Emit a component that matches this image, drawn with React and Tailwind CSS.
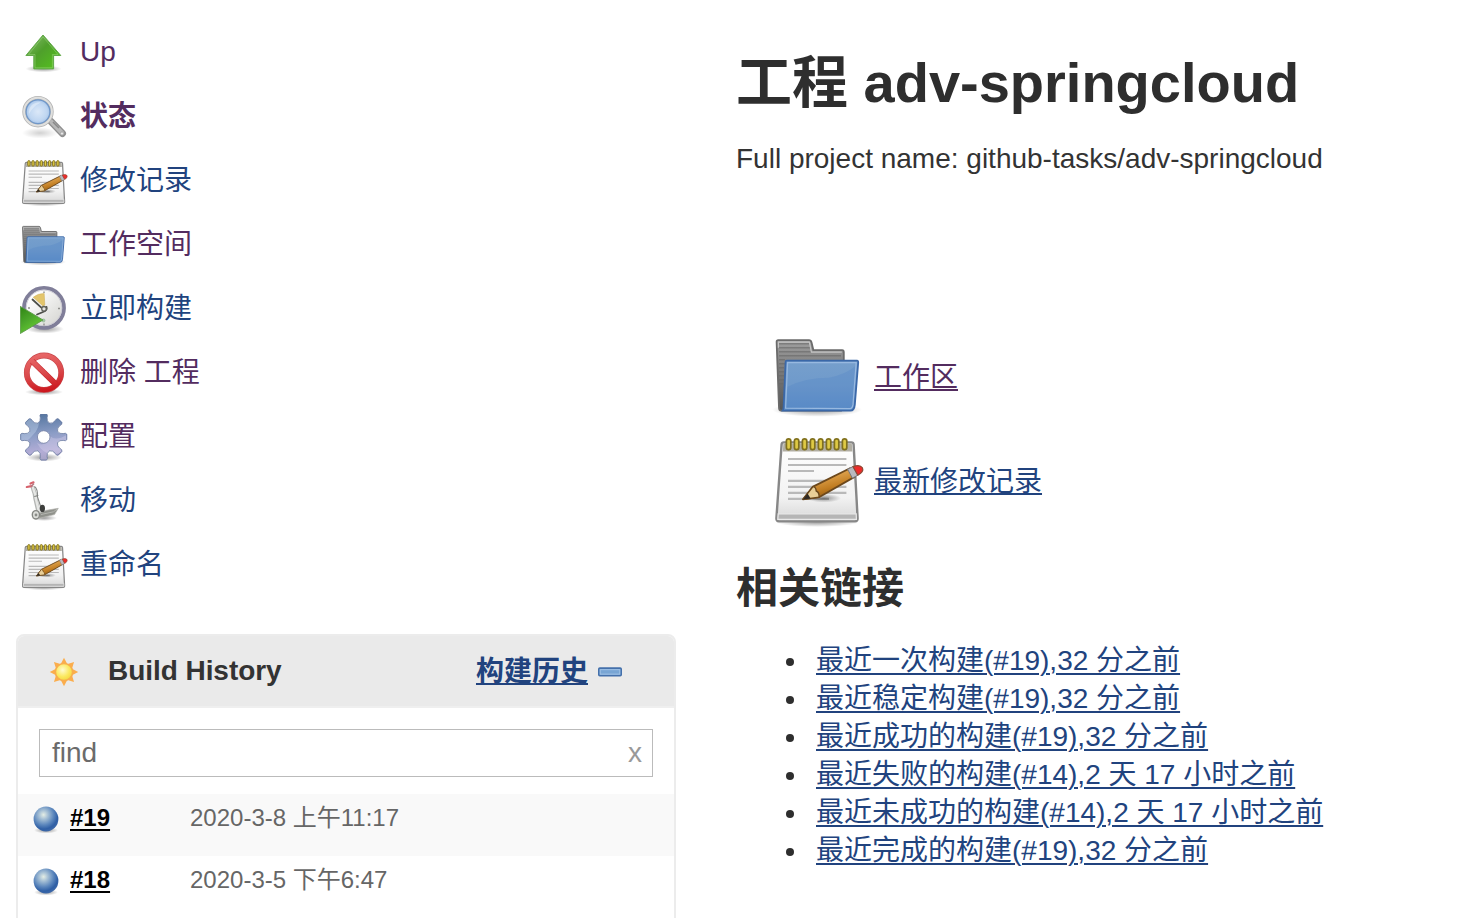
const SANS = "font-['Liberation_Sans','Noto_Sans_CJK_SC',sans-serif]";

function UpIcon({ className }) {
  return (
    <svg viewBox="0 0 48 48" className={className}>
      <defs>
        <linearGradient id="up-fill" x1="0" y1="0" x2="1" y2="1">
          <stop offset="0" stopColor="#8cbf72" />
          <stop offset="0.45" stopColor="#4f9f2c" />
          <stop offset="1" stopColor="#55c41c" />
        </linearGradient>
        <radialGradient id="soft-shadow">
          <stop offset="0" stopColor="#000" stopOpacity="0.4" />
          <stop offset="1" stopColor="#000" stopOpacity="0" />
        </radialGradient>
      </defs>
      <ellipse cx="23.500" cy="38.800" rx="18" ry="3.500" fill="url(#soft-shadow)" />
      <path d="M23 5 L40.800 25.500 H33.600 V38.900 H13.800 V25.500 H5.900 Z" fill="url(#up-fill)" stroke="#62a84a" strokeWidth="1" strokeLinejoin="round" />
      <path d="M23 6.800 L38 24.500 H32.400 V37.800 H15 V24.500 H8.500 Z" fill="none" stroke="#a5dd85" strokeOpacity="0.5" strokeWidth="0.900" />
    </svg>
  );
}

function SearchIcon({ className }) {
  return (
    <svg viewBox="0 0 48 48" className={className}>
      <defs>
        <radialGradient id="lens" cx="0.5" cy="0.500" r="0.550">
          <stop offset="0" stopColor="#dbe8f8" />
          <stop offset="0.600" stopColor="#bfd6f1" />
          <stop offset="1" stopColor="#8db1de" />
        </radialGradient>
      </defs>
      <ellipse cx="20" cy="39" rx="18" ry="5.500" fill="url(#soft-shadow)" opacity="0.450" />
      <path d="M31 27.500 L42.500 39.500" stroke="#909090" strokeWidth="7" strokeLinecap="round" />
      <path d="M31.500 28 L42 39" stroke="#b9b9b9" strokeWidth="4.500" strokeLinecap="round" />
      <path d="M33 28 L39 34" stroke="#8a8a8a" strokeWidth="1.500" />
      <circle cx="42" cy="39.500" r="1.600" fill="#e8e8e8" stroke="#8a8a8a" strokeWidth="0.500" />
      <circle cx="18" cy="17.700" r="13.800" fill="url(#lens)" stroke="#b4b4b4" strokeWidth="3.800" />
      <circle cx="18" cy="17.700" r="13.900" fill="none" stroke="#e0e0de" strokeWidth="2" />
      <circle cx="18" cy="17.700" r="11.900" fill="none" stroke="#6f97c9" strokeWidth="1.200" />
      <path d="M9 20 A10 10 0 0 1 21 8.500 Q13 12 9 20" fill="#fff" opacity="0.350" />
    </svg>
  );
}

function NotepadIcon({ className, viewBox = "0 0 48 48" }) {
  return (
    <svg viewBox={viewBox} className={className}>
      <defs>
        <linearGradient id="paper" x1="0" y1="0" x2="0" y2="1">
          <stop offset="0" stopColor="#ffffff" />
          <stop offset="0.700" stopColor="#f2f2f2" />
          <stop offset="1" stopColor="#d6d6d6" />
        </linearGradient>
        <linearGradient id="pencil" x1="0" y1="0" x2="0.450" y2="1">
          <stop offset="0.200" stopColor="#edb563" />
          <stop offset="0.700" stopColor="#c17d22" />
          <stop offset="1" stopColor="#8a5410" />
        </linearGradient>
      </defs>
      <ellipse cx="24" cy="44.500" rx="21" ry="2.500" fill="url(#soft-shadow)" />
      <path d="M7.400 4.700 H41.200 Q42.200 4.700 42.300 5.700 L44.300 42.500 Q44.400 44.200 43 44.200 H5 Q3.600 44.200 3.700 42.500 L6.300 5.700 Q6.400 4.700 7.400 4.700 Z" fill="url(#paper)" stroke="#878787" strokeWidth="1.200" />
      <path d="M7.200 5.300 H41.400 L41.700 9.200 H6.900 Z" fill="#b1aea3" />
      <path d="M4.600 40.400 H43.600 L43.700 43.200 H4.400 Z" fill="#b5b5b5" stroke="#e9e9e9" strokeWidth="0.600" />
      <path d="M9.500 13 H38.700 M9.500 16 H38.700 M9.500 19 H22.500 M9.500 23.900 H38.700 M9.500 26.900 H38.700 M9.500 29.900 H38.700 M9.500 32.900 H30" stroke="#b9b9b9" strokeWidth="1.100" />
      <g fill="#dfca45" stroke="#80701d" strokeWidth="0.850">
        {[9.8, 13.8, 17.8, 21.8, 25.8, 29.8, 33.8, 37.8].map((x) => (
          <rect key={x} x={x - 1.1} y="2.900" width="2.200" height="5.400" rx="1.100" />
        ))}
      </g>
      <ellipse cx="27.500" cy="32.600" rx="8.500" ry="2.200" fill="url(#soft-shadow)" />
      <path d="M17 33.200 L22 26.800 L40.500 17.600 L43 21.800 L25 32.100 Z" fill="url(#pencil)" stroke="#6c481c" strokeWidth="0.900" strokeLinejoin="round" />
      <path d="M17 33.200 L22 26.800 Q23.500 27 23.600 29 Q25.300 29.700 25 32.100 Z" fill="#e9cf98" stroke="#6c481c" strokeWidth="0.700" strokeLinejoin="round" />
      <path d="M17 33.200 L19.300 30.300 L20.800 32.700 Z" fill="#2f2a24" />
      <path d="M39.300 18.100 L42 16.800 L44.400 21.100 L41.700 22.600 Z" fill="#b9b9be" stroke="#77777c" strokeWidth="0.500" />
      <path d="M42 16.800 Q45.500 15.500 46.700 17.400 Q47.600 19.400 44.400 21.100 Z" fill="#ee2b2b" stroke="#8c4a35" strokeWidth="0.600" />
    </svg>
  );
}

function SmallNotepadIcon({ className }) {
  return <NotepadIcon className={className} viewBox="1.2 0.4 46.4 46.4" />;
}

function FolderIcon({ className, viewBox = "0 -0.4 48 48" }) {
  return (
    <svg viewBox={viewBox} className={className}>
      <defs>
        <linearGradient id="folder-back" x1="0" y1="0" x2="0" y2="1">
          <stop offset="0" stopColor="#a0a0a0" />
          <stop offset="0.400" stopColor="#7d7d7d" />
          <stop offset="1" stopColor="#565656" />
        </linearGradient>
        <linearGradient id="folder-front" x1="0" y1="0" x2="0" y2="1">
          <stop offset="0" stopColor="#769fcc" />
          <stop offset="0.500" stopColor="#6f9acb" />
          <stop offset="1" stopColor="#5c8dc7" />
        </linearGradient>
      </defs>
      <ellipse cx="24" cy="40" rx="22.500" ry="3.500" fill="url(#soft-shadow)" />
      <path d="M4.600 5.200 H20 Q21 5.200 21.300 6.400 L22.200 10.200 H36.600 Q37.400 10.200 37.400 11.200 V20 L36 40.400 H6 Q5 40.400 5 39 L3.800 6 Q3.800 5.200 4.600 5.200 Z" fill="url(#folder-back)" stroke="#6b6b6b" strokeWidth="0.900" />
      <path d="M5 7 H20 M5 9 H20.500 M5 11 H21 M5 13 H36 M5 15 H8 M5 17 H8 M5 19 H7.500 M5 21 H7.500 M5 23 H7.500 M5 25 H7.500 M5 27 H7" stroke="#686868" strokeWidth="0.700" opacity="0.600" />
      <path d="M4.700 9 V6.200 H20.200 L21.200 11.200 H36.400" fill="none" stroke="#c4c4c4" strokeWidth="0.600" />
      <path d="M8.900 15.400 H44 Q44.700 15.400 44.600 16.400 L42.900 37.500 Q42.600 40.400 40.700 40.400 H6.900 Q7.200 40 7.300 38.500 L8.300 16 Q8.300 15.400 8.900 15.400 Z" fill="url(#folder-front)" stroke="#3b68a8" strokeWidth="0.900" />
      <path d="M9.300 28.500 Q18 24 30 24 Q39 22 43.300 18 L41.800 37 Q41.500 39.300 40.200 39.300 H8.500 Z" fill="#4e83c4" opacity="0.280" />
      <path d="M8.300 39.200 L9.300 16.400 H43.600 L42 37.300 Q41.700 39.400 40.500 39.400 Z" fill="none" stroke="#98b9e0" strokeWidth="0.600" />
    </svg>
  );
}

function SmallFolderIcon({ className }) {
  return <FolderIcon className={className} viewBox="1.3 0.9 47 47" />;
}

function BuildNowIcon({ className }) {
  return (
    <svg viewBox="0 0 48 48" className={className}>
      <defs>
        <linearGradient id="clock-face" x1="0" y1="0" x2="1" y2="1">
          <stop offset="0.200" stopColor="#ffffff" />
          <stop offset="1" stopColor="#d0d0cc" />
        </linearGradient>
        <linearGradient id="play" x1="0" y1="0" x2="0.600" y2="1">
          <stop offset="0" stopColor="#2f8313" />
          <stop offset="0.500" stopColor="#4ba62b" />
          <stop offset="1" stopColor="#6ad033" />
        </linearGradient>
      </defs>
      <ellipse cx="25" cy="43" rx="19" ry="4.500" fill="url(#soft-shadow)" />
      <circle cx="24" cy="21.900" r="20" fill="url(#clock-face)" stroke="#807e99" strokeWidth="3.800" />
      <circle cx="24" cy="21.900" r="17.800" fill="none" stroke="#c9c8d2" strokeWidth="0.900" />
      <path d="M23 20 L13.200 11.300 Q17.500 7.500 24.200 7.500 L24.800 19 Z" fill="#e3c56c" stroke="#cbaa55" strokeWidth="0.500" />
      <path d="M12.500 13.500 L21.600 21.800 M26.500 20.800 Q27.500 24.500 23 26 L17 28.500" fill="none" stroke="#4c4e48" strokeWidth="1.800" strokeLinecap="round" />
      <circle cx="24" cy="22.800" r="2.300" fill="#e6e6e3" stroke="#60625c" strokeWidth="1.300" />
      <path d="M24 7 V5.500 M38 22.500 H40 M24 37.500 V39.500 M8 22 H10" stroke="#90908d" strokeWidth="1.400" />
      <circle cx="23.500" cy="34.500" r="1.900" fill="#a3c3a5" />
      <path d="M0.300 20.400 L23 34 L0.300 47.500 Z" fill="url(#play)" stroke="#5b9a48" strokeWidth="0.900" />
    </svg>
  );
}

function DeleteIcon({ className }) {
  return (
    <svg viewBox="0 0 48 48" className={className}>
      <defs>
        <linearGradient id="ban-line" gradientUnits="userSpaceOnUse" x1="20" y1="2" x2="28" y2="43">
          <stop offset="0" stopColor="#e96a6a" />
          <stop offset="0.500" stopColor="#db4b4d" />
          <stop offset="1" stopColor="#cb1118" />
        </linearGradient>
      </defs>
      <ellipse cx="24" cy="42" rx="19" ry="3.200" fill="url(#soft-shadow)" />
      <circle cx="24" cy="22.700" r="17.200" fill="#fff" stroke="#c8474b" strokeWidth="5.800" />
      <circle cx="24" cy="22.700" r="17.200" fill="none" stroke="url(#ban-line)" strokeWidth="4.600" />
      <path d="M12 11 L36 34.400" stroke="#c8252b" strokeWidth="5.800" />
      <path d="M11.500 10.500 L36.500 34.900" stroke="url(#ban-line)" strokeWidth="4.600" />
    </svg>
  );
}

const GEAR_ANGLES = [0, 45, 90, 135, 180, 225, 270, 315];

function GearIcon({ className }) {
  return (
    <svg viewBox="0 0 48 48" className={className}>
      <defs>
        <linearGradient id="gear" gradientUnits="userSpaceOnUse" x1="20" y1="0" x2="27" y2="46">
          <stop offset="0" stopColor="#54759f" />
          <stop offset="0.450" stopColor="#8c9dc6" />
          <stop offset="0.800" stopColor="#b3add6" />
          <stop offset="1" stopColor="#a7a3c5" />
        </linearGradient>
        <mask id="gear-mask">
          <g fill="#fff">
            <circle cx="23.700" cy="23" r="15" />
            {GEAR_ANGLES.map((a) => (
              <path key={a} d="M18.400 9.500 Q20.900 7 20.300 3.500 Q19.300 0.800 21 -0.500 H26.400 Q28.100 0.800 27.100 3.500 Q26.500 7 29 9.500 Z" transform={`rotate(${a} 23.7 23)`} />
            ))}
          </g>
          <circle cx="23.700" cy="23" r="6" fill="#000" />
        </mask>
      </defs>
      <ellipse cx="24" cy="43.500" rx="18" ry="4" fill="url(#soft-shadow)" />
      <g mask="url(#gear-mask)">
        <rect width="48" height="48" fill="url(#gear)" />
        <path d="M0 0 H19 Q21 14 12 22 Q6 29 0 30 Z" fill="#c5d8ed" opacity="0.400" />
        <path d="M30 22 Q36 28 48 20 V36 L33 41 Q22 39 17 29 Q25 34 30 22 Z" fill="#ded8f2" opacity="0.350" />
      </g>
      <circle cx="23.700" cy="23" r="6.300" fill="#fff" stroke="#7b86a9" strokeWidth="0.900" />
      <g fill="none" stroke="#68799f" strokeWidth="0.900" opacity="0.850">
        {GEAR_ANGLES.map((a) => (
          <path key={a} d="M17.900 9.300 Q20.900 7 20.300 3.500 Q19.300 0.800 21 0 H26.400 Q28.100 0.800 27.100 3.500 Q26.500 7 29.500 9.300" transform={`rotate(${a} 23.7 23)`} />
        ))}
      </g>
    </svg>
  );
}

function MoveIcon({ className }) {
  return (
    <svg viewBox="0 0 48 48" className={className}>
      <ellipse cx="24" cy="40" rx="13" ry="3" fill="url(#soft-shadow)" />
      <path d="M12.500 8.500 L13.500 12 Q15 15 15.300 20 L18.500 34" fill="none" stroke="#b3b5b3" strokeWidth="4.200" strokeLinejoin="round" />
      <path d="M12.800 9 L14 13 Q15.500 16 15.700 20 L19 34" fill="none" stroke="#e6e7e5" strokeWidth="2.400" />
      <path d="M14.500 8.500 Q18 11 17.500 19 L21.500 31" fill="none" stroke="#858785" strokeWidth="1.100" />
      <path d="M14.300 18.500 L18.300 17.500" stroke="#7b7d7a" strokeWidth="1" />
      <path d="M6.800 9 L11.500 8.200 M10.500 5.500 L13.500 4.300" stroke="#d6626c" strokeWidth="2.200" strokeLinecap="round" />
      <path d="M11 8.800 L14 5.500" stroke="#b37880" strokeWidth="1.500" />
      <path d="M20 34.800 L26.500 32.300 L38.300 30.300 L34.500 36.600 L19 40.300 Z" fill="#8f918b" stroke="#b4b5b0" strokeWidth="0.700" />
      <path d="M21 36.500 L33.500 33.800 L37.600 30.700" fill="none" stroke="#b5b6b1" strokeWidth="1" />
      <ellipse cx="22.400" cy="30.400" rx="2.600" ry="3.600" fill="#3d3e3c" />
      <ellipse cx="15.900" cy="36.800" rx="3.600" ry="4.200" fill="#dddeda" stroke="#858783" strokeWidth="1.400" />
      <circle cx="16" cy="37" r="1.400" fill="#8b8d89" />
    </svg>
  );
}

function SunIcon({ className }) {
  return (
    <svg viewBox="0 0 32 32" className={className}>
      <defs>
        <radialGradient id="sun" cx="0.420" cy="0.380" r="0.650">
          <stop offset="0" stopColor="#fffbd0" />
          <stop offset="0.600" stopColor="#fbe960" />
          <stop offset="1" stopColor="#f3d640" />
        </radialGradient>
      </defs>
      <g fill="#fbad4c">
        {GEAR_ANGLES.map((a) => (
          <path key={a} d="M16 1.800 L19.500 8.500 H12.500 Z" transform={`rotate(${a} 16 16)`} />
        ))}
      </g>
      <circle cx="16" cy="16" r="8.600" fill="url(#sun)" stroke="#f8ad4e" strokeWidth="1.500" />
    </svg>
  );
}

function BallIcon({ className }) {
  return (
    <svg viewBox="0 0 32 32" className={className}>
      <defs>
        <radialGradient id="ball" cx="0.400" cy="0.330" r="0.680">
          <stop offset="0" stopColor="#e5eee5" />
          <stop offset="0.250" stopColor="#a9c2d6" />
          <stop offset="0.600" stopColor="#5c87bd" />
          <stop offset="0.850" stopColor="#2f5fa5" />
          <stop offset="1" stopColor="#3d68a8" />
        </radialGradient>
      </defs>
      <ellipse cx="16" cy="26.300" rx="12" ry="3.200" fill="url(#soft-shadow)" />
      <circle cx="16" cy="15" r="12.400" fill="url(#ball)" />
    </svg>
  );
}

function CollapseIcon({ className }) {
  return (
    <svg viewBox="0 0 24 10" className={className}>
      <rect x="0.800" y="1.100" width="22.400" height="7.600" rx="1" fill="#78a5d4" stroke="#4470ab" strokeWidth="1.600" />
      <rect x="2.200" y="2.700" width="19.600" height="4.400" fill="none" stroke="#a3c4e6" strokeWidth="0.900" />
    </svg>
  );
}

const VISITED = "text-[#532c5f]";
const LINK = "text-[#21437e]";

const tasks = [
  { label: "Up", Icon: UpIcon, style: VISITED, inset: "pb-1" },
  { label: "状态", Icon: SearchIcon, style: "text-[#532c5f] font-bold", inset: "pb-0.5" },
  { label: "修改记录", Icon: SmallNotepadIcon, style: LINK, inset: "pb-0.5" },
  { label: "工作空间", Icon: SmallFolderIcon, style: VISITED, inset: "pb-0.5" },
  { label: "立即构建", Icon: BuildNowIcon, style: LINK, inset: "pb-0.5" },
  { label: "删除 工程", Icon: DeleteIcon, style: VISITED, inset: "pb-0.5" },
  { label: "配置", Icon: GearIcon, style: VISITED, inset: "pb-0.5" },
  { label: "移动", Icon: MoveIcon, style: LINK, inset: "pb-0.5" },
  { label: "重命名", Icon: SmallNotepadIcon, style: LINK, inset: "pb-0.5" },
];

const builds = [
  { id: "#19", date: "2020-3-8 上午11:17" },
  { id: "#18", date: "2020-3-5 下午6:47" },
];

const permalinks = [
  "最近一次构建(#19),32 分之前",
  "最近稳定构建(#19),32 分之前",
  "最近成功的构建(#19),32 分之前",
  "最近失败的构建(#14),2 天 17 小时之前",
  "最近未成功的构建(#14),2 天 17 小时之前",
  "最近完成的构建(#19),32 分之前",
];

function BuildHistory() {
  return (
    <section className="mt-9 h-[320px] w-[660px] rounded-t-lg border-2 border-[#ececec] bg-white">
      <header className="flex h-[72px] items-center rounded-t-md border-b-2 border-[#efefef] bg-[#eaeaea] pl-[30px] pr-[52px]">
        <SunIcon className="mt-0.5 size-8" />
        <h2 className="ml-7 text-[28px] leading-8 font-bold tracking-[-0.05px] text-[#333]">Build History</h2>
        <a href="#" className="mt-0.5 ml-auto text-[28px] leading-8 font-bold text-[#21437e] underline decoration-2 underline-offset-2">构建历史</a>
        <CollapseIcon className="ml-2.5 mt-0.5 h-2.5 w-6" />
      </header>
      <div className="px-[21px] pt-[21px] pb-[17px]">
        <div className="flex h-12 items-center justify-between border border-[#bbb] px-3 text-[28px] leading-8">
          <span className="text-[#6b6b6b]">find</span>
          <button type="button" className="-mr-0.5 text-[#999]">x</button>
        </div>
      </div>
      <div>
        {builds.map((build) => (
          <div key={build.id} className="flex h-[62px] items-start pt-2 pl-3 text-2xl leading-8 odd:bg-[#f9f9f9]">
            <BallIcon className="mt-0.5 size-8" />
            <a href="#" className="ml-2 w-[120px] font-bold text-black underline decoration-2 underline-offset-[3px]">{build.id}</a>
            <span className="text-[#666]">{build.date}</span>
          </div>
        ))}
      </div>
    </section>
  );
}

export default function App() {
  return (
    <div className={`flex h-[918px] w-full overflow-hidden bg-white text-[28px] text-[#333] ${SANS}`}>
      <aside className="w-[736px] shrink-0 pt-[22px] pl-4">
        <nav className="pl-1">
          {tasks.map(({ label, Icon, style, inset }) => (
            <a key={label} href="#" className={`flex h-16 items-center gap-3 leading-8 ${style}`}>
              <Icon className="size-12 shrink-0" />
              <span className={inset}>{label}</span>
            </a>
          ))}
        </nav>
        <BuildHistory />
      </aside>
      <main className="min-w-0 flex-1 pt-[50px]">
        <h1 className="text-[56px] leading-[66px] font-bold text-[#2e2e2e]">工程 adv-springcloud</h1>
        <p className="mt-[27px] leading-8">Full project name: github-tasks/adv-springcloud</p>
        <div className="mt-[154px] flex flex-col gap-2 pl-[33px]">
          <a href="#" className="flex h-24 items-center gap-[9px] text-[#532c5f]">
            <FolderIcon className="size-24" />
            <span className="pt-0.5 leading-8 underline decoration-2 underline-offset-2">工作区</span>
          </a>
          <a href="#" className="flex h-24 items-center gap-[9px] text-[#21437e]">
            <NotepadIcon className="size-24" />
            <span className="pt-0.5 leading-8 underline decoration-2 underline-offset-2">最新修改记录</span>
          </a>
        </div>
        <h2 className="mt-[35px] text-[42px] leading-[50px] font-bold text-[#2e2e2e]">相关链接</h2>
        <ul className="mt-7 pl-[50px]">
          {permalinks.map((text) => (
            <li key={text} className="flex items-center gap-[22px] leading-[38px]">
              <span className="mt-0.5 size-2 rounded-full bg-[#2e2e2e]" />
              <a href="#" className="text-[#21437e] underline decoration-2 underline-offset-[3px]">{text}</a>
            </li>
          ))}
        </ul>
      </main>
    </div>
  );
}
